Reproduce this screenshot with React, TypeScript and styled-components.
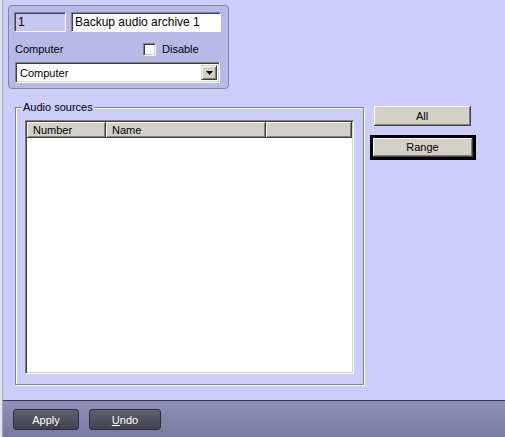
import styled, { createGlobalStyle } from 'styled-components';

const GlobalStyle = createGlobalStyle`
  html, body {
    margin: 0;
    padding: 0;
    background: #cdcdfa;
  }
  body {
    font-family: 'Liberation Sans', Arial, sans-serif;
    font-size: 11px;
    color: #000;
  }
`;

const columns = [
  { title: 'Number', width: 79 },
  { title: 'Name', width: 160 },
  { title: '', width: 0 },
];

export default function App() {
  return (
    <>
      <GlobalStyle />
      <Frame>
        <Inner>
          <Content>
            <ObjectPanel>
              <FieldRow>
                <TextField $readonly $width={52}>1</TextField>
                <TextField $width={150}>Backup audio archive 1</TextField>
              </FieldRow>
              <OptionRow>
                <Label>Computer</Label>
                <CheckLabel>
                  <CheckBox />
                  Disable
                </CheckLabel>
              </OptionRow>
              <ComboBox>
                <ComboText>Computer</ComboText>
                <ComboButton>
                  <svg width="7" height="4" viewBox="0 0 7 4">
                    <path d="M0 0h7L3.5 4z" fill="#000" />
                  </svg>
                </ComboButton>
              </ComboBox>
            </ObjectPanel>

            <MiddleRow>
              <GroupBox>
                <GroupTitle>Audio sources</GroupTitle>
                <ListView>
                  <ListHeader>
                    {columns.map((col) => (
                      <HeaderCell key={col.title || 'rest'} $width={col.width}>
                        {col.title}
                      </HeaderCell>
                    ))}
                  </ListHeader>
                  <ListBody />
                </ListView>
              </GroupBox>

              <ButtonColumn>
                <ClassicButton>All</ClassicButton>
                <ClassicButton $focused>Range</ClassicButton>
              </ButtonColumn>
            </MiddleRow>
          </Content>

          <Footer>
            <DarkButton $width={66}>Apply</DarkButton>
            <DarkButton $width={72}>
              <u>U</u>ndo
            </DarkButton>
          </Footer>
        </Inner>
      </Frame>
    </>
  );
}

const Frame = styled.div`
  width: 505px;
  height: 437px;
  display: flex;
  border-left: 2px solid #e2e2f0;
  box-sizing: border-box;
  overflow: hidden;
`;

const Inner = styled.div`
  flex: 1;
  display: flex;
  flex-direction: column;
  border-left: 1px solid #a4a4bc;
`;

const Content = styled.div`
  flex: 1;
  background: #cdcdfa;
  padding: 5px 0 0 5px;
`;

const ObjectPanel = styled.div`
  width: 221px;
  height: 84px;
  box-sizing: border-box;
  border: 1px solid #84849e;
  border-radius: 4px;
  background: #b9b9e8;
  padding: 6px 0 0 5px;
`;

const FieldRow = styled.div`
  display: flex;
  gap: 5px;
`;

const TextField = styled.div<{ $readonly?: boolean; $width: number }>`
  width: ${(p) => p.$width}px;
  height: 20px;
  box-sizing: border-box;
  border-top: 1px solid #80809a;
  border-left: 1px solid #80809a;
  border-right: 1px solid #fff;
  border-bottom: 1px solid #fff;
  box-shadow: inset 1px 1px 0 #404050;
  background: ${(p) => (p.$readonly ? '#c6c6f2' : '#fff')};
  padding: 0 3px;
  display: flex;
  align-items: center;
  font-size: 12px;
  white-space: nowrap;
`;

const OptionRow = styled.div`
  display: grid;
  grid-template-columns: 128px auto;
  align-items: center;
  height: 14px;
  margin: 10px 0 0 1px;
`;

const Label = styled.span`
  font-size: 11px;
`;

const CheckLabel = styled.label`
  display: flex;
  align-items: center;
  gap: 6px;
  font-size: 11px;
`;

const CheckBox = styled.span`
  width: 13px;
  height: 13px;
  box-sizing: border-box;
  background: #fff;
  border-top: 1px solid #808080;
  border-left: 1px solid #808080;
  border-right: 1px solid #fff;
  border-bottom: 1px solid #fff;
  box-shadow: inset 1px 1px 0 #404040, inset -1px -1px 0 #d4d0c8;
`;

const ComboBox = styled.div`
  width: 205px;
  height: 21px;
  box-sizing: border-box;
  margin: 6px 0 0 1px;
  display: flex;
  align-items: center;
  background: #fff;
  border-top: 1px solid #808080;
  border-left: 1px solid #808080;
  border-right: 1px solid #fff;
  border-bottom: 1px solid #fff;
  box-shadow: inset 1px 1px 0 #404040, inset -1px -1px 0 #d4d0c8;
  padding: 2px;
`;

const ComboText = styled.span`
  flex: 1;
  padding-left: 2px;
  font-size: 11px;
`;

const ComboButton = styled.span`
  width: 16px;
  height: 15px;
  box-sizing: border-box;
  background: #d4d0c8;
  border-top: 1px solid #d4d0c8;
  border-left: 1px solid #d4d0c8;
  border-right: 1px solid #404040;
  border-bottom: 1px solid #404040;
  box-shadow: inset 1px 1px 0 #fff, inset -1px -1px 0 #808080;
  display: flex;
  align-items: center;
  justify-content: center;
`;

const MiddleRow = styled.div`
  display: flex;
  align-items: flex-start;
  margin: 18px 0 0 7px;
`;

const GroupBox = styled.div`
  position: relative;
  width: 349px;
  height: 278px;
  box-sizing: border-box;
  border: 1px solid #80809c;
  box-shadow: inset 1px 1px 0 #fff, 1px 1px 0 #fff;
  padding: 12px 9px 10px 9px;
  display: flex;
`;

const GroupTitle = styled.span`
  position: absolute;
  top: -8px;
  left: 6px;
  padding: 0 1px;
  background: #cdcdfa;
  font-size: 11px;
  line-height: 14px;
`;

const ListView = styled.div`
  flex: 1;
  display: flex;
  flex-direction: column;
  background: #fff;
  border-top: 1px solid #808080;
  border-left: 1px solid #808080;
  border-right: 1px solid #fff;
  border-bottom: 1px solid #fff;
  box-shadow: inset 1px 1px 0 #404040, inset -1px -1px 0 #d4d0c8;
  padding: 1px;
`;

const ListHeader = styled.div`
  display: flex;
  height: 16px;
`;

const HeaderCell = styled.div<{ $width: number }>`
  ${(p) => (p.$width ? `width: ${p.$width}px;` : 'flex: 1;')}
  box-sizing: border-box;
  background: #d4d0c8;
  border-right: 1px solid #404040;
  border-bottom: 1px solid #404040;
  box-shadow: inset 1px 1px 0 #fff, inset -1px -1px 0 #808080;
  padding-left: 6px;
  display: flex;
  align-items: center;
  font-size: 11px;
`;

const ListBody = styled.div`
  flex: 1;
`;

const ButtonColumn = styled.div`
  display: flex;
  flex-direction: column;
  align-items: flex-start;
  gap: 12px;
  margin: -1px 0 0 10px;
`;

const ClassicButton = styled.button<{ $focused?: boolean }>`
  width: ${(p) => (p.$focused ? 100 : 97)}px;
  height: ${(p) => (p.$focused ? 19 : 20)}px;
  margin-left: ${(p) => (p.$focused ? -1 : 0)}px;
  box-sizing: border-box;
  padding: 0;
  background: #d4d0c8;
  border: none;
  border-right: 1px solid #404040;
  border-bottom: 1px solid #404040;
  box-shadow: inset 1px 1px 0 #fff, inset -1px -1px 0 #808080;
  outline: ${(p) => (p.$focused ? '3px solid #000' : 'none')};
  font-family: 'Liberation Sans', Arial, sans-serif;
  font-size: 11px;
  color: #000;
`;

const Footer = styled.div`
  height: 37px;
  box-sizing: border-box;
  border-top: 1px solid #34344e;
  background: linear-gradient(#9090b8, #7878a0);
  display: flex;
  align-items: flex-start;
  gap: 10px;
  padding: 8px 0 0 10px;
`;

const DarkButton = styled.button<{ $width: number }>`
  width: ${(p) => p.$width}px;
  height: 21px;
  box-sizing: border-box;
  padding: 0;
  border: 1px solid #2e2e3c;
  border-radius: 3px;
  background: linear-gradient(#62626f, #40404e);
  color: #fff;
  font-family: 'Liberation Sans', Arial, sans-serif;
  font-size: 11px;
`;
